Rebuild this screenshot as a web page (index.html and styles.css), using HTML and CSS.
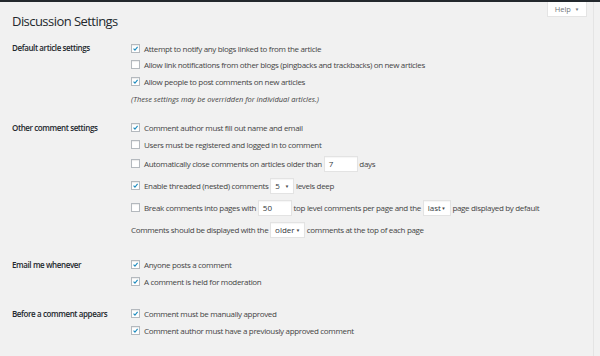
FILE: index.html
```html
<!DOCTYPE html>
<html lang="en">
<head>
    <meta charset="UTF-8">
    <meta name="viewport" content="width=device-width, initial-scale=1.0">
    <title>Discussion Settings</title>
    <link rel="stylesheet" href="styles.css">
</head>
<body>

    <div class="topbar"></div>

    <div class="wrap">
        <div class="help-tab">Help <span class="arrow">&#9660;</span></div>

        <h1>Discussion Settings</h1>

        <div class="section">
            <div class="label">Default article settings</div>
            <div class="fields">
                <div class="row"><span class="cb on"><svg viewBox="0 0 9 9"><polyline points="2,4.6 3.8,6.6 7.2,2.4"/></svg></span>Attempt to notify any blogs linked to from the article</div>
                <div class="row"><span class="cb"></span>Allow link notifications from other blogs (pingbacks and trackbacks) on new articles</div>
                <div class="row"><span class="cb on"><svg viewBox="0 0 9 9"><polyline points="2,4.6 3.8,6.6 7.2,2.4"/></svg></span>Allow people to post comments on new articles</div>
                <div class="row note">(These settings may be overridden for individual articles.)</div>
            </div>
        </div>

        <div class="section">
            <div class="label">Other comment settings</div>
            <div class="fields">
                <div class="row"><span class="cb on"><svg viewBox="0 0 9 9"><polyline points="2,4.6 3.8,6.6 7.2,2.4"/></svg></span>Comment author must fill out name and email</div>
                <div class="row"><span class="cb"></span>Users must be registered and logged in to comment</div>
                <div class="row tall"><span class="cb"></span>Automatically close comments on articles older than <span class="input w34">7</span> days</div>
                <div class="row tall"><span class="cb on"><svg viewBox="0 0 9 9"><polyline points="2,4.6 3.8,6.6 7.2,2.4"/></svg></span>Enable threaded (nested) comments <span class="select w24">5<span class="arrow">&#9660;</span></span> levels deep</div>
                <div class="row tall"><span class="cb"></span>Break comments into pages with <span class="input w34">50</span> top level comments per page and the <span class="select w27">last<span class="arrow">&#9660;</span></span> page displayed by default</div>
                <div class="row tall">Comments should be displayed with the <span class="select w35">older<span class="arrow">&#9660;</span></span> comments at the top of each page</div>
            </div>
        </div>

        <div class="section">
            <div class="label">Email me whenever</div>
            <div class="fields">
                <div class="row"><span class="cb on"><svg viewBox="0 0 9 9"><polyline points="2,4.6 3.8,6.6 7.2,2.4"/></svg></span>Anyone posts a comment</div>
                <div class="row"><span class="cb on"><svg viewBox="0 0 9 9"><polyline points="2,4.6 3.8,6.6 7.2,2.4"/></svg></span>A comment is held for moderation</div>
            </div>
        </div>

        <div class="section">
            <div class="label">Before a comment appears</div>
            <div class="fields">
                <div class="row"><span class="cb on"><svg viewBox="0 0 9 9"><polyline points="2,4.6 3.8,6.6 7.2,2.4"/></svg></span>Comment must be manually approved</div>
                <div class="row"><span class="cb on"><svg viewBox="0 0 9 9"><polyline points="2,4.6 3.8,6.6 7.2,2.4"/></svg></span>Comment author must have a previously approved comment</div>
            </div>
        </div>
    </div>

</body>
</html>
```

FILE: styles.css
```css
html,
body {
    margin: 0;
    height: 100%;
}

body {
    font-family: "Open Sans", "Noto Sans", sans-serif;
    font-size: 8px;
    color: #444;
    background-color: #f1f1f1;
    overflow: hidden;
}

.topbar {
    height: 2px;
    background: #23282d;
}

.wrap {
    position: relative;
    width: 594px;
    height: 354px;
    padding-left: 12px;
    box-sizing: border-box;
    border-right: 1px solid #e4e4e4;
}

.help-tab {
    position: absolute;
    top: 0;
    left: 547px;
    width: 40px;
    height: 15px;
    box-sizing: border-box;
    background: #fff;
    border: 1px solid #e4e4e4;
    border-top: none;
    color: #72777c;
    font-size: 7.5px;
    line-height: 14px;
    text-align: center;
}

.help-tab .arrow {
    font-size: 4.5px;
    vertical-align: 1px;
    margin-left: 2px;
}

h1 {
    margin: 0;
    padding-top: 8px;
    height: 30px;
    box-sizing: border-box;
    font-size: 13px;
    font-weight: 400;
    color: #23282d;
    line-height: 22px;
    letter-spacing: -0.55px;
}

.section {
    display: flex;
    margin-top: 8px;
    margin-bottom: 16px;
}

.label {
    width: 119px;
    font-weight: 600;
    color: #23282d;
    line-height: 16.5px;
    letter-spacing: -0.4px;
}

.fields {
    display: flex;
    flex-direction: column;
}

.row {
    display: flex;
    align-items: center;
    height: 16.5px;
    white-space: pre;
    letter-spacing: -0.33px;
}

.row.tall {
    height: 22px;
}

.row.note {
    height: 14px;
    align-items: flex-end;
    font-style: italic;
    font-size: 7.5px;
    letter-spacing: 0;
}

.cb {
    width: 9px;
    height: 9px;
    box-sizing: border-box;
    border: 1px solid #b4b9be;
    background: #fff;
    box-shadow: inset 0 1px 1px rgba(0, 0, 0, 0.08);
    margin-right: 4px;
    flex-shrink: 0;
}

.cb svg {
    display: block;
    width: 7px;
    height: 7px;
}

.cb polyline {
    fill: none;
    stroke: #1e8cbe;
    stroke-width: 1.4;
}

.input,
.select {
    display: inline-flex;
    align-items: center;
    justify-content: space-between;
    height: 16px;
    box-sizing: border-box;
    padding: 0 4px;
    background: #fff;
    border: 1px solid #e3e3e3;
    box-shadow: inset 0 1px 1px rgba(0, 0, 0, 0.04);
    color: #32373c;
    letter-spacing: 0;
}

.select .arrow {
    font-size: 4.5px;
    color: #444;
}

.w24 { width: 24px; }
.w27 { width: 28px; }
.w34 { width: 34px; }
.w35 { width: 35px; }
```
